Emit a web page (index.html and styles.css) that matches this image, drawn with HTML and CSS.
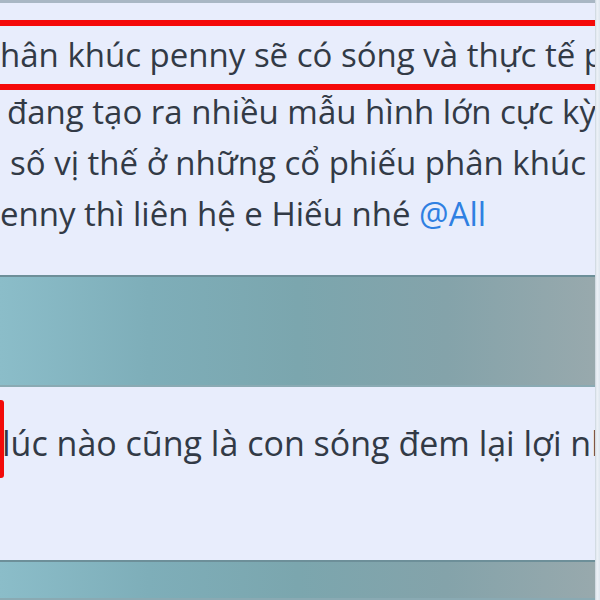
FILE: index.html
```html
<!DOCTYPE html>
<html lang="vi">
<head>
<meta charset="utf-8">
<link rel="stylesheet" href="styles.css">
</head>
<body>
<div class="page">
  <div class="column">
    <div class="top-edge"></div>
    <div class="bubble bubble-first">
      <div class="highlight">
        <div class="line line-1">hân khúc penny sẽ có sóng và thực tế p</div>
      </div>
      <div class="line line-2">đang tạo ra nhiều mẫu hình lớn cực kỳ</div>
      <div class="line line-3">số vị thế ở những cổ phiếu phân khúc</div>
      <div class="line line-4">enny thì liên hệ e Hiếu nhé <span class="mention">@All</span></div>
    </div>
    <div class="band band-mid"></div>
    <div class="bubble bubble-second">
      <div class="quote-mark"></div>
      <div class="line line-5">lúc nào cũng là con sóng đem lại lợi nh</div>
    </div>
    <div class="band band-end"></div>
  </div>
  <div class="rail"></div>
</div>
</body>
</html>
```
FILE: styles.css
```css
html, body {
  margin: 0;
  padding: 0;
  width: 600px;
  height: 600px;
  overflow: hidden;
  background: #7fa8b0;
}
.page {
  display: flex;
  width: 600px;
  height: 600px;
}
.column {
  width: 595px;
  display: flex;
  flex-direction: column;
  overflow: hidden;
}
.rail {
  width: 5px;
  background: linear-gradient(to right, #c9d4dc, #eef2f8 40%, #dde6ee);
}
.top-edge {
  height: 3px;
  background: #a9b7c4;
  flex: none;
}
.bubble {
  background: #e8edfc;
  flex: none;
  font-family: "Open Sans", "Noto Sans", sans-serif;
  font-size: 33px;
  color: #323a46;
  white-space: nowrap;
}
.bubble-first {
  height: 272px;
  padding-top: 17px;
  box-sizing: border-box;
}
.highlight {
  border-top: 6px solid #f50a0a;
  border-bottom: 6px solid #f50a0a;
  height: 58px;
  margin: 0 -20px;
  padding: 0 20px;
  display: flex;
  align-items: center;
}
.line {
  height: 52px;
  line-height: 52px;
}
.line-1 { margin-left: 0; }
.line-2 { margin-left: 7px; margin-top: -4px; }
.line-3 { margin-left: 10px; margin-top: -1px; }
.line-4 { margin-left: 0; margin-top: -1px; }
.mention { color: #2f80e2; }
.band {
  flex: none;
  background: linear-gradient(to right, #8bbdc9 0%, #7eaeb9 25%, #7ba6ae 50%, #84a3aa 75%, #98a9ad 100%);
  box-shadow: inset 0 2px 0 #6d8f99, inset 0 -2px 0 #8aaab3;
}
.band-mid { height: 112px; }
.band-end { flex: 1; }
.bubble-second {
  height: 173px;
  display: flex;
  align-items: flex-start;
  padding-top: 30px;
  box-sizing: border-box;
}
.quote-mark {
  width: 4px;
  height: 78px;
  margin-top: -17px;
  background: #f20a0a;
  border-radius: 0 3px 3px 0;
  flex: none;
}
.line-5 { margin-left: -2px; font-size: 34px; }
```
